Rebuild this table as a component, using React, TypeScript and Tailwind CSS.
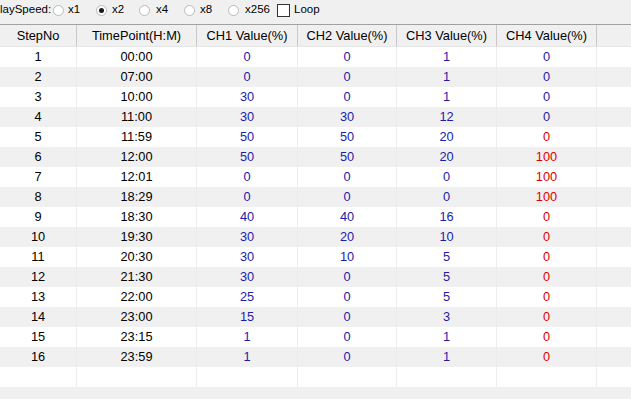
import React from "react";

const rows: [number, string, number, number, number, number][] = [
  [1, "00:00", 0, 0, 1, 0],
  [2, "07:00", 0, 0, 1, 0],
  [3, "10:00", 30, 0, 1, 0],
  [4, "11:00", 30, 30, 12, 0],
  [5, "11:59", 50, 50, 20, 0],
  [6, "12:00", 50, 50, 20, 100],
  [7, "12:01", 0, 0, 0, 100],
  [8, "18:29", 0, 0, 0, 100],
  [9, "18:30", 40, 40, 16, 0],
  [10, "19:30", 30, 20, 10, 0],
  [11, "20:30", 30, 10, 5, 0],
  [12, "21:30", 30, 0, 5, 0],
  [13, "22:00", 25, 0, 5, 0],
  [14, "23:00", 15, 0, 3, 0],
  [15, "23:15", 1, 0, 1, 0],
  [16, "23:59", 1, 0, 1, 0],
];

const widths = ["w-[77px]", "w-[120px]", "w-[101px]", "w-[99px]", "w-[100px]", "w-[100px]"];
const headers = ["StepNo", "TimePoint(H:M)", "CH1 Value(%)", "CH2 Value(%)", "CH3 Value(%)", "CH4 Value(%)"];

function Radio({ checked }: { checked?: boolean }) {
  return (
    <span className="inline-flex h-[11px] w-[11px] items-center justify-center rounded-full border border-[#b9b9b9] bg-white">
      {checked && <span className="h-[5px] w-[5px] rounded-full bg-[#1a1a1a]" />}
    </span>
  );
}

export default function App() {
  return (
    <div
      className="flex h-[399px] w-[631px] flex-col overflow-hidden bg-[#f0f0f0] text-[12.8px] text-black"
      style={{ fontFamily: '"Liberation Sans", Arial, sans-serif' }}
    >
      <div className="flex h-[25px] items-center border-b border-[#a0a0a0] bg-[#f0f0f0] pb-[4px] text-[11.5px]">
        <span className="w-[53px]">laySpeed:</span>
        <Radio />
        <span className="ml-[4px] w-[28px]">x1</span>
        <Radio checked />
        <span className="ml-[5px] w-[27px]">x2</span>
        <Radio />
        <span className="ml-[6px] w-[28px]">x4</span>
        <Radio />
        <span className="ml-[5px] w-[28px]">x8</span>
        <Radio />
        <span className="ml-[6px] w-[32px]">x256</span>
        <span className="h-[13px] w-[13px] border border-[#333333] bg-white" />
        <span className="ml-[4px]">Loop</span>
      </div>
      <div className="flex h-[22px] items-center border-b border-[#e5e5e5] bg-[#f0f0f0]">
        {headers.map((h, i) => (
          <div
            key={h}
            className={`${widths[i]} flex h-full items-center justify-center border-r border-[#c8c8c8]`}
          >
            {h}
          </div>
        ))}
        <div className="h-full flex-1" />
      </div>
      {rows.map((r, idx) => {
        const bg = idx % 2 === 0 ? "bg-white" : "bg-[#f0f0f0]";
        const ch4Red = idx >= 4;
        return (
          <div key={r[0]} className={`flex h-[20px] items-center ${bg}`}>
            <div className={`${widths[0]} flex h-full items-center justify-center border-r border-[#ececec]`}>{r[0]}</div>
            <div className={`${widths[1]} flex h-full items-center justify-center border-r border-[#ececec]`}>{r[1]}</div>
            <div className={`${widths[2]} flex h-full items-center justify-center border-r border-[#ececec] text-[#1c1ca8]`}>{r[2]}</div>
            <div className={`${widths[3]} flex h-full items-center justify-center border-r border-[#ececec] text-[#1c1ca8]`}>{r[3]}</div>
            <div className={`${widths[4]} flex h-full items-center justify-center border-r border-[#ececec] text-[#1c1ca8]`}>{r[4]}</div>
            <div
              className={`${widths[5]} flex h-full items-center justify-center border-r border-[#ececec] ${
                ch4Red ? "text-[#e00000]" : "text-[#1c1ca8]"
              }`}
            >
              {r[5]}
            </div>
            <div className="h-full flex-1" />
          </div>
        );
      })}
      <div className="flex h-[20px] bg-white">
        {widths.map((w) => (
          <div key={w + "e"} className={`${w} h-full border-r border-[#ececec]`} />
        ))}
        <div className="h-full flex-1" />
      </div>
    </div>
  );
}
